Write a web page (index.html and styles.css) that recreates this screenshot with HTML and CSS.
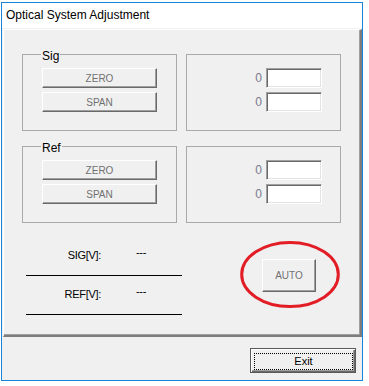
FILE: index.html
```html
<!DOCTYPE html>
<html lang="en">
<head>
  <meta charset="UTF-8">
  <title>Optical System Adjustment</title>
  <link rel="stylesheet" href="styles.css">
</head>
<body>

<div class="window">
  <div class="titlebar">Optical System Adjustment</div>

  <div class="client">
    <div class="panel">

      <div class="groups">
        <div class="group">
          <span class="group-title">Sig</span>
          <div class="btn-stack">
            <button class="btn" disabled>ZERO</button>
            <button class="btn" disabled>SPAN</button>
          </div>
        </div>
        <div class="group">
          <div class="values">
            <div class="value-row"><span class="value-label">0</span><input class="tb" type="text" readonly></div>
            <div class="value-row"><span class="value-label">0</span><input class="tb" type="text" readonly></div>
          </div>
        </div>

        <div class="group">
          <span class="group-title">Ref</span>
          <div class="btn-stack">
            <button class="btn" disabled>ZERO</button>
            <button class="btn" disabled>SPAN</button>
          </div>
        </div>
        <div class="group">
          <div class="values">
            <div class="value-row"><span class="value-label">0</span><input class="tb" type="text" readonly></div>
            <div class="value-row"><span class="value-label">0</span><input class="tb" type="text" readonly></div>
          </div>
        </div>
      </div>

      <div class="bottom">
        <div class="readouts">
          <div class="readout">
            <span class="readout-label">SIG[V]:</span>
            <span class="readout-value">---</span>
          </div>
          <div class="readout">
            <span class="readout-label">REF[V]:</span>
            <span class="readout-value">---</span>
          </div>
        </div>
        <div class="auto-wrap">
          <button class="btn btn-auto" disabled>AUTO</button>
          <svg class="mark" width="100" height="67" viewBox="0 0 100 67">
            <ellipse cx="50" cy="33.5" rx="48.3" ry="32" fill="none" stroke="#e31d25" stroke-width="3"/>
          </svg>
        </div>
      </div>

    </div>

    <div class="footer">
      <button class="btn-exit"><span class="focus">Exit</span></button>
    </div>
  </div>
</div>

</body>
</html>
```

FILE: styles.css
```css
body {
  margin: 0;
  background-color: #fff;
  font-family: "Liberation Sans", Arial, sans-serif;
  color: #000;
}
.window {
  box-sizing: border-box;
  width: 362px;
  height: 379px;
  margin: 2px 0 0 1px;
  border: 1px solid #1883d7;
  display: flex;
  flex-direction: column;
}
.titlebar {
  height: 25px;
  line-height: 24px;
  padding-left: 4px;
  background-color: #fff;
  font-size: 12px;
  color: #000;
}
.client {
  flex: 1;
  background-color: #f0f0f0;
}
.panel {
  box-sizing: border-box;
  width: 359px;
  height: 308px;
  margin: 1px 0 0 1px;
  padding: 24px 0 0 18px;
  border-style: solid;
  border-width: 1px 2px 2px 1px;
  border-color: #fff #7d7d7d #7d7d7d #fff;
  box-shadow: inset -1px -1px 0 #a0a0a0;
}
.groups {
  display: grid;
  grid-template-columns: 155px 155px;
  grid-auto-rows: 77px;
  column-gap: 9px;
  row-gap: 15px;
}
.group {
  position: relative;
  box-sizing: border-box;
  border: 1px solid #a9a9a9;
}
.group-title {
  position: absolute;
  top: -6px;
  left: 18px;
  padding: 0 1px;
  background-color: #f0f0f0;
  font-size: 12px;
  line-height: 14px;
}
.btn-stack {
  display: flex;
  flex-direction: column;
  gap: 4px;
  padding: 13px 0 0 19px;
}
.btn {
  box-sizing: border-box;
  width: 115px;
  height: 20px;
  padding: 0;
  background-color: #f0f0f0;
  border: 1px solid;
  border-color: #fff #696969 #696969 #fff;
  box-shadow: inset -1px -1px 0 #a0a0a0;
  font-family: "Liberation Sans", Arial, sans-serif;
  font-size: 10px;
  color: #707070;
}
.values {
  display: flex;
  flex-direction: column;
  gap: 4px;
  padding: 13px 18px 0 0;
}
.value-row {
  display: flex;
  justify-content: flex-end;
  align-items: center;
  gap: 4px;
  height: 20px;
}
.value-label {
  font-size: 12px;
  color: #78788c;
}
.tb {
  box-sizing: border-box;
  width: 56px;
  height: 20px;
  margin: 0;
  padding: 0;
  background-color: #fff;
  border: 1px solid;
  border-color: #a0a0a0 #fff #fff #a0a0a0;
  box-shadow: inset 1px 1px 0 #696969, inset -1px -1px 0 #e3e3e3;
  outline: none;
}
.bottom {
  display: flex;
  align-items: flex-start;
  margin-top: 14px;
}
.readouts {
  width: 156px;
  margin-left: 4px;
}
.readout {
  display: flex;
  align-items: flex-start;
  padding: 12px 0 13px;
  border-bottom: 1px solid #000;
  font-size: 11px;
  line-height: 13px;
  letter-spacing: -0.3px;
}
.readout-label {
  width: 75px;
  text-align: right;
}
.readout-value {
  margin: -3px 0 0 35px;
}
.auto-wrap {
  position: relative;
  margin: 22px 0 0 80px;
}
.btn-auto {
  display: block;
  width: 54px;
  height: 33px;
}
.mark {
  position: absolute;
  left: -22px;
  top: -18px;
  pointer-events: none;
}
.footer {
  display: flex;
  justify-content: flex-end;
  padding: 11px 6px 0 0;
}
.btn-exit {
  box-sizing: border-box;
  width: 106px;
  height: 25px;
  padding: 0;
  background-color: #f0f0f0;
  border: 1px solid #5a5a5a;
  box-shadow: inset 1px 1px 0 #fff, inset -1px -1px 0 #696969, inset -2px -2px 0 #a0a0a0;
  font-family: "Liberation Sans", Arial, sans-serif;
  font-size: 11px;
  color: #000;
}
.focus {
  display: block;
  height: 17px;
  margin: 3px 2px 2px 3px;
  border: 1px dotted #000;
  box-sizing: border-box;
  line-height: 15px;
}
```
